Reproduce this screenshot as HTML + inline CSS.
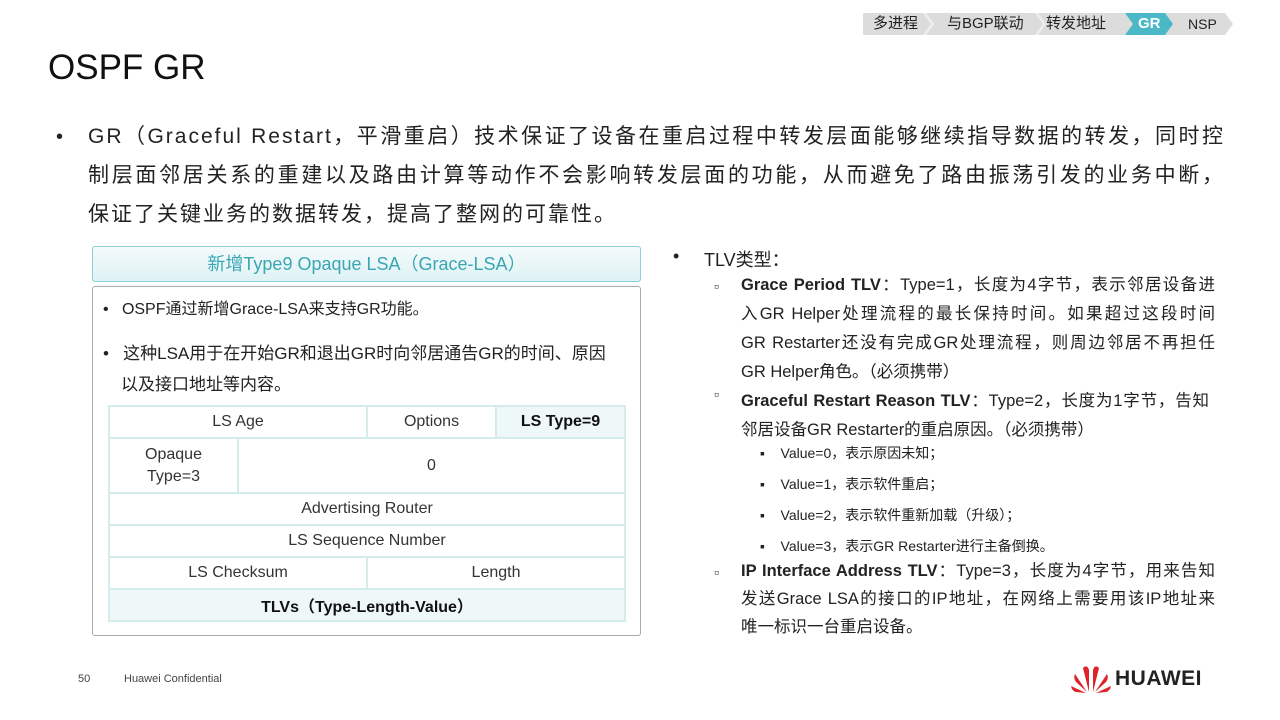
<!DOCTYPE html>
<html><head><meta charset="utf-8"><style>
*{margin:0;padding:0;box-sizing:border-box}
body{width:1280px;height:720px;background:#fff;position:relative;overflow:hidden;font-family:"Liberation Sans","Noto Sans CJK SC",sans-serif;color:#222}
.a{position:absolute;white-space:nowrap}
.nav{position:absolute;top:13px;height:22px;font-size:15px;line-height:22px;color:#222}
table{border-collapse:collapse;position:absolute;left:108px;top:405px;width:516px;font-size:16px;color:#333;table-layout:fixed}
td{border:2px solid #d5ecec;text-align:center;padding:0}
.sq{position:absolute;font-size:14px;color:#333}
.j{display:block;text-align:justify;text-align-last:justify;white-space:normal}
.p .j{width:1137px}
.r .j{width:474px}
</style></head><body>
<div class="a" style="left:863px;top:13px;width:362px;height:22px;background:#dcdcdc"></div>
<svg class="a" style="left:863px;top:13px" width="380" height="22">
<polygon points="262,0 302,0 310,11 302,22 262,22 270,11" fill="#4ab8c6"/>
<polygon points="60,0 68,11 60,22 63,22 71,11 63,0" fill="#eee"/>
<polygon points="172,0 180,11 172,22 175,22 183,11 175,0" fill="#eee"/>
<polygon points="362,0 370,11 362,22" fill="#dcdcdc"/>
</svg>
<div class="nav" style="left:873px">多进程</div>
<div class="nav" style="left:947px">与BGP联动</div>
<div class="nav" style="left:1046px">转发地址</div>
<div class="nav" style="left:1138px;color:#fff;font-weight:bold">GR</div>
<div class="nav" style="left:1188px;font-size:14px">NSP</div>
<div class="a" style="left:48px;top:48px;font-size:35px;color:#111">OSPF GR</div>
<div class="a" style="left:56px;top:126px;font-size:20px">•</div>
<div class="a p" style="left:88px;top:117px;font-size:21px;line-height:39px;letter-spacing:2px">
<span class="j">GR（Graceful Restart，平滑重启）技术保证了设备在重启过程中转发层面能够继续指导数据的转发，同时控</span>
<span class="j">制层面邻居关系的重建以及路由计算等动作不会影响转发层面的功能，从而避免了路由振荡引发的业务中断，</span>
<span>保证了关键业务的数据转发，提高了整网的可靠性。</span></div>
<div class="a" style="left:92px;top:246px;width:549px;height:36px;border:1px solid #8fcfd6;border-radius:3px;background:linear-gradient(#f4fbfc,#dff2f4);text-align:center;font-size:18px;line-height:34px;color:#3aa6b4">新增Type9 Opaque LSA（Grace-LSA）</div>
<div class="a" style="left:92px;top:286px;width:549px;height:350px;border:1px solid #aaa;border-radius:3px"></div>
<div class="a" style="left:103px;top:298px;font-size:16px;line-height:24px">•&nbsp;&nbsp; OSPF通过新增Grace-LSA来支持GR功能。</div>
<div class="a" style="left:103px;top:338px;font-size:17px;line-height:31px">•&nbsp;&nbsp; 这种LSA用于在开始GR和退出GR时向邻居通告GR的时间、原因</div>
<div class="a" style="left:121px;top:369px;font-size:17px;line-height:31px">以及接口地址等内容。</div>
<table>
<colgroup><col style="width:129px"><col style="width:129px"><col style="width:129px"><col style="width:129px"></colgroup>
<tr style="height:32px"><td colspan="2">LS Age</td><td>Options</td><td style="background:#eef8f9;font-weight:bold;color:#111">LS Type=9</td></tr>
<tr style="height:55px"><td style="line-height:22px">Opaque<br>Type=3</td><td colspan="3">0</td></tr>
<tr style="height:32px"><td colspan="4">Advertising Router</td></tr>
<tr style="height:32px"><td colspan="4">LS Sequence Number</td></tr>
<tr style="height:32px"><td colspan="2">LS Checksum</td><td colspan="2">Length</td></tr>
<tr style="height:32px"><td colspan="4" style="background:#eef8f9;font-weight:bold;color:#111">TLVs（Type-Length-Value）</td></tr>
</table>
<div class="a" style="left:673px;top:246px;font-size:18px">•</div>
<div class="a" style="left:704px;top:246px;font-size:18px">TLV类型：</div>
<div class="sq" style="left:714px;top:278px">▫</div>
<div class="sq" style="left:714px;top:386px">▫</div>
<div class="sq" style="left:714px;top:564px">▫</div>
<div class="a r" style="left:741px;top:271px;font-size:16.5px;line-height:29px">
<span class="j"><b>Grace Period TLV</b>：Type=1，长度为4字节，表示邻居设备进</span>
<span class="j">入GR Helper处理流程的最长保持时间。如果超过这段时间</span>
<span class="j">GR Restarter还没有完成GR处理流程，则周边邻居不再担任</span>
<span style="display:block">GR Helper角色。（必须携带）</span>
<span class="j" style="width:468px"><b>Graceful Restart Reason TLV</b>：Type=2，长度为1字节，告知</span>
<span style="display:block">邻居设备GR Restarter的重启原因。（必须携带）</span></div>
<div class="a" style="left:760px;top:438px;font-size:14px;line-height:31px">▪&nbsp;&nbsp;&nbsp; Value=0，表示原因未知；<br>▪&nbsp;&nbsp;&nbsp; Value=1，表示软件重启；<br>▪&nbsp;&nbsp;&nbsp; Value=2，表示软件重新加载（升级）；<br>▪&nbsp;&nbsp;&nbsp; Value=3，表示GR Restarter进行主备倒换。</div>
<div class="a r" style="left:741px;top:557px;font-size:16.5px;line-height:28px">
<span class="j"><b>IP Interface Address TLV</b>：Type=3，长度为4字节，用来告知</span>
<span class="j">发送Grace LSA的接口的IP地址，在网络上需要用该IP地址来</span>
<span style="display:block">唯一标识一台重启设备。</span></div>
<div class="a" style="left:78px;top:673px;font-size:11px;color:#444">50</div>
<div class="a" style="left:124px;top:673px;font-size:11px;color:#444">Huawei Confidential</div>
<svg class="a" style="left:1070px;top:662px" width="42" height="32" viewBox="0 0 42 32">
<g fill="#e0232b">
<path d="M19 30 L13 6 Q17 2 19 8Z"/><path d="M23 30 L29 6 Q25 2 23 8Z"/>
<path d="M17 30 L5 12 Q3 16 6 20Z"/><path d="M25 30 L37 12 Q39 16 36 20Z"/>
<path d="M16 31 L1 24 Q2 29 6 30Z"/><path d="M26 31 L41 24 Q40 29 36 30Z"/>
</g></svg>
<div class="a" style="left:1115px;top:667px;font-size:21px;font-weight:bold;color:#222;letter-spacing:0.5px">HUAWEI</div>
</body></html>
